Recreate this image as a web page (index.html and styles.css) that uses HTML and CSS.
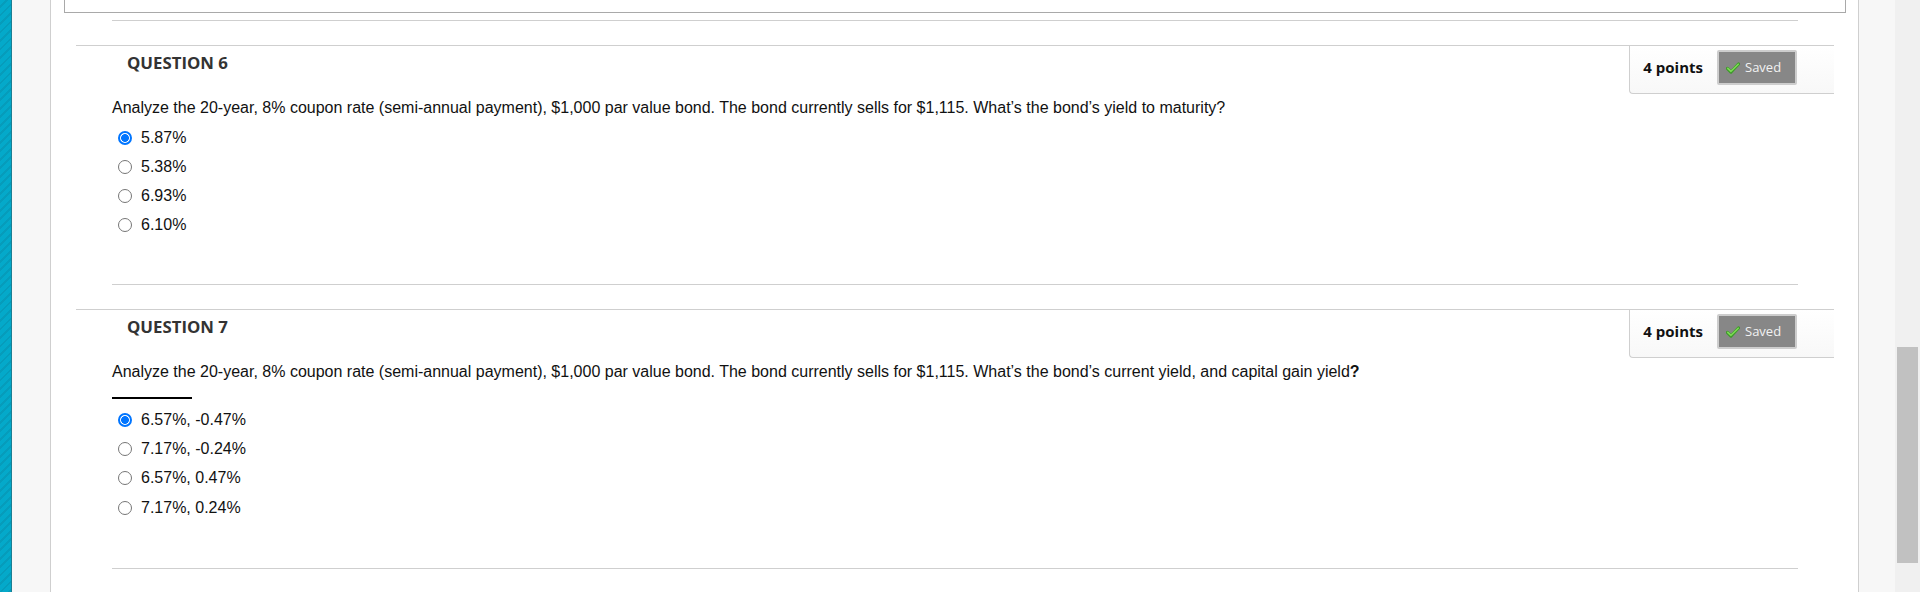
FILE: index.html
```html
<!DOCTYPE html>
<html>
<head>
<meta charset="utf-8">
<link rel="stylesheet" href="styles.css">
</head>
<body>
<div class="page">
  <div class="stripe"></div>
  <div class="gutter"></div>
  <main class="main">
    <div class="topbox"></div>
    <div class="prev-sep"></div>

    <section class="q">
      <div class="q-head">
        <h3 class="q-title">QUESTION 6</h3>
        <div class="points">
          <span class="pts">4 points</span>
          <span class="saved"><svg class="chk" width="14" height="12" viewBox="0 0 14 12"><path d="M1.5 6.5 L5 10 L12.5 2" fill="none" stroke="#3d9a2a" stroke-width="3.2" stroke-linecap="round" stroke-linejoin="round"/><path d="M1.8 6.3 L5 9.3 L12.2 2.2" fill="none" stroke="#7ddb55" stroke-width="1.6" stroke-linecap="round" stroke-linejoin="round"/></svg>Saved</span>
        </div>
      </div>
      <div class="q-body">
        <p class="q-text">Analyze the 20-year, 8% coupon rate (semi-annual payment), $1,000 par value bond. The bond currently sells for $1,115. What’s the bond’s yield to maturity?</p>
        <div class="opts">
          <label class="opt"><input type="radio" name="q6" checked><span>5.87%</span></label>
          <label class="opt"><input type="radio" name="q6"><span>5.38%</span></label>
          <label class="opt"><input type="radio" name="q6"><span>6.93%</span></label>
          <label class="opt"><input type="radio" name="q6"><span>6.10%</span></label>
        </div>
        <div class="sep"></div>
      </div>
    </section>

    <section class="q">
      <div class="q-head">
        <h3 class="q-title">QUESTION 7</h3>
        <div class="points">
          <span class="pts">4 points</span>
          <span class="saved"><svg class="chk" width="14" height="12" viewBox="0 0 14 12"><path d="M1.5 6.5 L5 10 L12.5 2" fill="none" stroke="#3d9a2a" stroke-width="3.2" stroke-linecap="round" stroke-linejoin="round"/><path d="M1.8 6.3 L5 9.3 L12.2 2.2" fill="none" stroke="#7ddb55" stroke-width="1.6" stroke-linecap="round" stroke-linejoin="round"/></svg>Saved</span>
        </div>
      </div>
      <div class="q-body">
        <p class="q-text">Analyze the 20-year, 8% coupon rate (semi-annual payment), $1,000 par value bond. The bond currently sells for $1,115. What’s the bond’s current yield, and capital gain yield<b>?</b></p>
        <div class="rule"></div>
        <div class="opts opts-tight">
          <label class="opt"><input type="radio" name="q7" checked><span>6.57%, -0.47%</span></label>
          <label class="opt"><input type="radio" name="q7"><span>7.17%, -0.24%</span></label>
          <label class="opt"><input type="radio" name="q7"><span>6.57%, 0.47%</span></label>
          <label class="opt"><input type="radio" name="q7"><span>7.17%, 0.24%</span></label>
        </div>
        <div class="sep"></div>
      </div>
    </section>
  </main>
  <div class="rgutter"></div>
  <div class="scroll"><div class="thumb"></div></div>
</div>
</body>
</html>
```

FILE: styles.css
```css
html, body {
  margin: 0;
  padding: 0;
  background: #fff;
}
.page {
  display: flex;
  width: 1920px;
  height: 592px;
  overflow: hidden;
}
.stripe {
  width: 11px;
  flex: none;
  border-right: 1px solid #1b7f93;
  background: repeating-linear-gradient(135deg, #04a9ca 0px, #04a9ca 4px, #069cbb 4px, #069cbb 6px);
}
.gutter {
  width: 38px;
  flex: none;
  background: #f7f7f7;
  border-right: 1px solid #cfcfcf;
}
.main {
  flex: 1;
  background: #fff;
  min-width: 0;
}
.topbox {
  height: 12px;
  margin: 0 12px 0 13px;
  border: 1px solid #a9a9a9;
  border-top: none;
}
.prev-sep {
  margin: 7px 60px 0 61px;
  border-top: 1px solid #cfcfcf;
}
.q {
  margin: 24px 24px 0 25px;
  border-top: 1px solid #cfcfcf;
}
.q-head {
  display: flex;
  justify-content: space-between;
  align-items: flex-start;
  height: 48px;
}
.q-title {
  margin: 5px 0 0 51px;
  font: 700 16.8px/24px "Open Sans", sans-serif;
  color: #333;
}
.points {
  box-sizing: border-box;
  height: 48px;
  display: flex;
  align-items: flex-start;
  gap: 14px;
  padding: 4px 37px 0 13px;
  border-left: 1px solid #cfcfcf;
  border-bottom: 1px solid #cfcfcf;
  border-bottom-left-radius: 4px;
  background: linear-gradient(#ffffff, #f8f8f8);
}
.pts {
  font: 700 15px/35px "Open Sans", sans-serif;
  color: #111;
}
.saved {
  box-sizing: border-box;
  width: 80px;
  height: 35px;
  display: flex;
  align-items: center;
  gap: 5px;
  padding-left: 7px;
  background: #878787;
  border: 2px solid #cdcdcd;
  border-radius: 2px;
  font: 400 13px/1 "Open Sans", sans-serif;
  color: #f2f2f2;
}
.chk {
  display: block;
  flex: none;
}
.q-body {
  padding: 0 36px;
}
.q-text {
  margin: 4px 0 0;
  font: 16px/20px "Liberation Sans", Arial, sans-serif;
  color: #111;
}
.opts {
  margin-top: 5px;
}
.opt {
  display: flex;
  align-items: center;
  height: 29px;
  font: 16px/20px "Liberation Sans", Arial, sans-serif;
  color: #111;
}
.opts-tight {
  margin-top: 6px;
}
.opts-tight .opt {
  height: 29.4px;
}
.opt input {
  appearance: none;
  -webkit-appearance: none;
  box-sizing: border-box;
  width: 14px;
  height: 14px;
  margin: 0 9px 0 6px;
  flex: none;
  border: 1px solid #767676;
  border-radius: 50%;
  background: #fff;
}
.opt input:checked {
  border: 2px solid #0075ff;
  background: radial-gradient(circle, #0075ff 0, #0075ff 3.6px, #fff 4.2px);
}
.rule {
  width: 80px;
  height: 2px;
  background: #000;
  margin-top: 15px;
}
.sep {
  margin-top: 45px;
  border-top: 1px solid #cfcfcf;
}
.rgutter {
  width: 36px;
  flex: none;
  background: #f7f7f7;
  border-left: 1px solid #cfcfcf;
}
.scroll {
  width: 25px;
  flex: none;
  background: #f0f0f0;
}
.thumb {
  margin: 347px 2px 0 2px;
  height: 216px;
  background: #c1c1c1;
}
```
